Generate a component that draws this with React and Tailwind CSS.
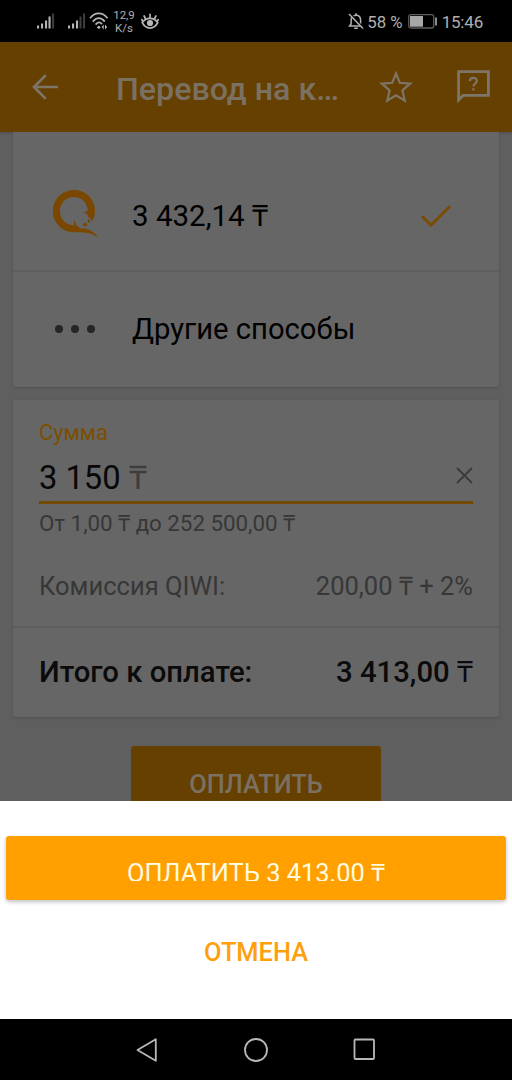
import React from "react";

function Signal({ faint, className }) {
  const bars = [
    [0, 3], [4, 5], [8, 8], [11.5, 12], [15, 15],
  ];
  return (
    <svg className={className} width="18" height="16" viewBox="0 0 18 16">
      {bars.map(([x, h], i) => (
        <rect key={x} x={x} y={15.5 - h} width="2.1" height={h} fill={i >= 5 - faint ? "#3c3c3c" : "#b4b4b4"} />
      ))}
    </svg>
  );
}

function StatusBar() {
  return (
    <div className="flex h-[42px] shrink-0 items-center bg-black pr-[29px] pl-[37px] text-[#b0b0b0]">
      <Signal faint={1} />
      <Signal faint={2} className="ml-[13px]" />
      <svg className="ml-[3px]" width="20" height="18" viewBox="0 0 20 18" fill="none" stroke="#b4b4b4" strokeWidth="1.8">
        <path d="M1 6.2C6-.2 13.5-.2 18.5 6.2" />
        <path d="M3.8 9.6C7.5 5 12 5 15.8 9.6" />
        <path d="M6.6 12.6C8.8 9.8 11 9.8 13 12.2" />
        <circle cx="9.8" cy="15.3" r="1.5" fill="#b4b4b4" stroke="none" />
        <path d="M14.7 12.6L12.6 15l2.1 2.4zM16 12.6l2.2 2.4-2.2 2.4z" fill="#b4b4b4" stroke="none" />
      </svg>
      <div className="mt-[2px] ml-[3px] flex w-[24px] flex-col items-center text-[11.5px] leading-[13px] whitespace-nowrap">
        <span>12,9</span>
        <span>K/s</span>
      </div>
      <svg className="mt-[1px] ml-[5px]" width="18" height="17" viewBox="0 0 18 17" fill="none" stroke="#b8b8b8" strokeWidth="1.7">
        <path d="M1.2 9.7C5 3.9 13 3.9 16.8 9.7C13 16.8 5 16.8 1.2 9.7Z" />
        <circle cx="9" cy="10" r="3.1" fill="#b8b8b8" stroke="none" />
        <path d="M9 5V.8M4.6 6L2.8 2.4M13.4 6l1.8-3.6M1.8 8.4L.4 6M16.2 8.4L17.6 6" />
      </svg>
      <svg className="mr-[3px] ml-auto" width="16" height="17" viewBox="0 0 16 17" fill="none" stroke="#b4b4b4" strokeWidth="1.5">
        <path d="M1 1L15 15.6" />
        <path d="M3.8 4.4C3.1 5.5 3.1 6.5 3.1 8.5V11L1.6 13H12.3M5.6 2.9C6.4 2.4 7.2 2.2 8 2.2c3 0 4.6 2.2 4.6 5V10.5" />
        <path d="M8 .3V2.2M6.2 15.3H9.8" />
      </svg>
      <span className="mt-[2px] text-[16.8px] leading-5 whitespace-nowrap">58 %</span>
      <svg className="ml-[5px]" width="29" height="15" viewBox="0 0 29 15">
        <rect x=".7" y=".7" width="25" height="13.3" rx="2" fill="none" stroke="#5c5c5c" strokeWidth="1.3" />
        <rect x="2" y="2" width="13" height="10.7" fill="#a8a8a8" />
        <rect x="27" y="3.5" width="2" height="8" fill="#8a8a8a" />
      </svg>
      <span className="mt-[2px] ml-[5px] text-[17px] leading-5 tracking-[-0.2px]">15:46</span>
    </div>
  );
}

function Header() {
  return (
    <div className="flex h-[90px] shrink-0 items-center bg-[#664000] pr-[22px] pl-[32px] text-[#7b7163] shadow-[0_1px_2px_#505050]">
      <svg width="26" height="26" viewBox="0 0 26 26" fill="none" stroke="#7d7568" strokeWidth="2.6">
        <path d="M26 13H2M13.8 1.2L2 13l11.8 11.8" />
      </svg>
      <h1 className="mt-[3px] ml-[58px] w-[230px] text-[32.2px] leading-10 font-medium whitespace-nowrap">Перевод на к…</h1>
      <svg className="ml-[32px]" width="36" height="36" viewBox="0 0 36 36" fill="none" stroke="#7d7568" strokeWidth="2.2" strokeLinejoin="miter">
        <path d="M18 4.5L21.8 13.8L32.3 14.7L24.4 21.4L26.8 31.6L18 26.2L9.2 31.6L11.6 21.4L3.7 14.7L14.2 13.8Z" />
      </svg>
      <svg className="-mt-[1px] ml-auto" width="33" height="33" viewBox="0 0 33 33" fill="none" stroke="#7d7568">
        <path d="M1.6 30V1.6H31.4V25.4H6.2Z" strokeWidth="2.8" />
        <path d="M12.9 11.2C12.9 6.9 19.8 6.9 19.8 11C19.8 13.6 16.4 13.7 16.4 16.6M16.4 18.2V20.4" strokeWidth="2.2" />
      </svg>
    </div>
  );
}

function QiwiLogo() {
  return (
    <svg className="-mt-[3px]" width="48" height="50" viewBox="0 0 48 50">
      <path
        d="M22 1C10.2 1 1 10.2 1 22C1 34 10.2 43.3 22 43.3C30 43.3 37 42.5 46.5 48.5C41 42 36 39.5 28.5 39.3C25 38 24 35 22.3 31C21.5 33 21.8 35 22.5 36.2C13.5 36.5 8 30 8 22C8 14 14.3 8 22 8C29.5 8 34.5 13 35.8 20.5C35.8 22.5 33 23.5 30.5 24C34 24.2 36 25 36.3 28C38.5 29 39.5 30.5 39.8 32.5C42 29 43 25.5 43 22C43 10.2 33.8 1 22 1Z"
        fill="#7a4700"
      />
      <ellipse cx="33" cy="35.7" rx="2.1" ry="1.6" fill="#7a4700" />
      <ellipse cx="37" cy="32" rx="1.1" ry="1.7" fill="#7a4700" />
    </svg>
  );
}

export default function App() {
  return (
    <div className="flex h-[1080px] w-[512px] flex-col overflow-hidden bg-[#5f5f5f] font-['Roboto',sans-serif]">
      <StatusBar />
      <Header />
      <main className="flex h-[669px] shrink-0 flex-col overflow-hidden px-[13px]">
        <section className="h-[255px] shrink-0 rounded-b-[3px] bg-[#666] text-[29.2px] text-black shadow-[0_1px_3px_#505050]">
          <div className="flex h-[140px] items-center border-b-2 border-[#5e5e5e] pt-[29px] pr-[48px] pl-[39px]">
            <QiwiLogo />
            <span className="ml-[32px] text-[29.5px] leading-10">3 432,14 ₸</span>
            <svg className="ml-auto" width="30" height="24" viewBox="0 0 30 24" fill="none" stroke="#7a4c00" strokeWidth="3">
              <path d="M1 12.2L10 21.2L29 2.2" />
            </svg>
          </div>
          <div className="flex h-[113px] items-center pl-[42px]">
            <div className="flex w-[77px] gap-[8px]">
              <i className="size-2 rounded-full bg-[#262626]" />
              <i className="size-2 rounded-full bg-[#262626]" />
              <i className="size-2 rounded-full bg-[#262626]" />
            </div>
            <span className="leading-10">Другие способы</span>
          </div>
        </section>

        <section className="mt-[13px] h-[317px] shrink-0 rounded-[3px] bg-[#666] shadow-[0_1px_3px_#505050]">
          <div className="flex h-[228px] flex-col border-b-2 border-[#5e5e5e] px-[26px] pt-[17px]">
            <span className="text-[21.9px] leading-8 text-[#7c4e00]">Сумма</span>
            <div className="flex h-[55px] items-center justify-between border-b-[3px] border-[#734900] pt-[6px]">
              <span className="text-[32.7px] leading-10 text-[#080808]">3 150 <span className="text-[#3d3d3d]">₸</span></span>
              <svg className="-mt-[5px]" width="17" height="17" viewBox="0 0 17 17" stroke="#3a3a3a" strokeWidth="1.8">
                <path d="M1 1l15 15M16 1L1 16" />
              </svg>
            </div>
            <span className="mt-[3px] text-[22.3px] leading-8 text-[#373737]">От 1,00 ₸ до 252 500,00 ₸</span>
            <div className="mt-[31px] flex justify-between text-[25.5px] leading-8 text-[#373737]">
              <span>Комиссия QIWI:</span>
              <span>200,00 ₸ + 2%</span>
            </div>
          </div>
          <div className="flex h-[89px] items-center justify-between px-[26px] pt-[1px] text-[29.3px] font-medium text-[#0b0b0b]">
            <span>Итого к оплате:</span>
            <span>3 413,00 ₸</span>
          </div>
        </section>

        <button className="mt-[29px] flex h-[72px] w-[250px] shrink-0 justify-center self-center rounded-[3px] bg-[#664000] pt-[18px] text-[25.4px] leading-10 font-medium text-[#7b7163]">
          ОПЛАТИТЬ
        </button>
      </main>

      <div className="flex h-[218px] shrink-0 flex-col bg-white px-[6px] pt-[35px]">
        <button className="flex h-[64px] shrink-0 justify-center rounded-[3px] bg-[#ffa000] pt-[20px] text-[25.4px] text-[#fffbe0] shadow-[0_2px_4px_rgba(0,0,0,0.25)]">
          <span className="h-[25px] overflow-hidden leading-[34px]">ОПЛАТИТЬ 3 413.00 ₸</span>
        </button>
        <button className="mt-[32px] text-[25.4px] leading-10 font-medium text-[#ff9f0c]">ОТМЕНА</button>
      </div>

      <nav className="flex h-[61px] shrink-0 items-center bg-black pl-[136px]">
        <svg width="22" height="26" viewBox="0 0 22 26" fill="none" stroke="#b8b8b8" strokeWidth="1.8" strokeLinejoin="round">
          <path d="M19.8 2.2V23.8L1.5 13Z" />
        </svg>
        <svg className="ml-[86px]" width="24" height="24" viewBox="0 0 24 24" fill="none" stroke="#b8b8b8" strokeWidth="1.8">
          <circle cx="12" cy="12" r="11" />
        </svg>
        <svg className="ml-[85px]" width="23" height="23" viewBox="0 0 23 23" fill="none" stroke="#b8b8b8" strokeWidth="1.8">
          <rect x="1.5" y="1.5" width="19.5" height="19.5" rx="1" />
        </svg>
      </nav>
    </div>
  );
}
